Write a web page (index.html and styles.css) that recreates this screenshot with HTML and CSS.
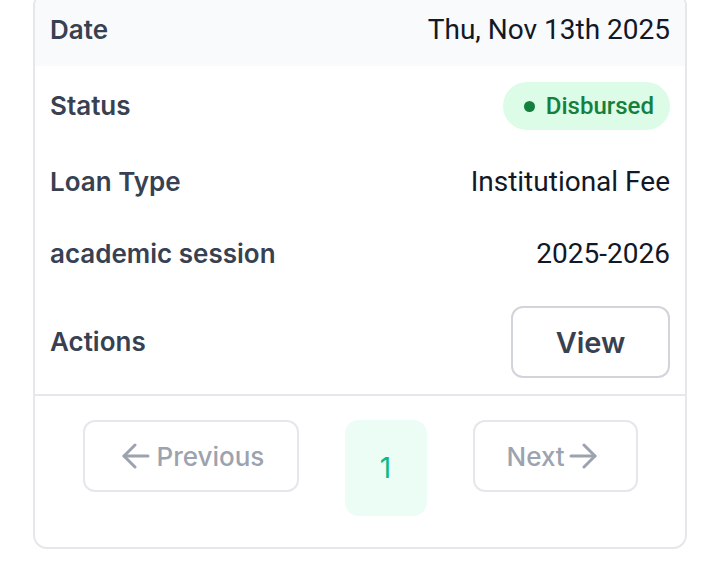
FILE: index.html
```html
<!DOCTYPE html>
<html lang="en">
<head>
<meta charset="utf-8">
<title>Loan detail</title>
<link rel="stylesheet" href="styles.css">
</head>
<body>
<div class="page">
  <div class="card">
    <div class="row row-alt">
      <span class="label">Date</span>
      <span class="value">Thu, Nov 13th 2025</span>
    </div>
    <div class="row">
      <span class="label">Status</span>
      <span class="badge"><span class="dot"></span>Disbursed</span>
    </div>
    <div class="row">
      <span class="label">Loan Type</span>
      <span class="value">Institutional Fee</span>
    </div>
    <div class="row">
      <span class="label">academic session</span>
      <span class="value">2025-2026</span>
    </div>
    <div class="row">
      <span class="label">Actions</span>
      <button class="btn-view" type="button">View</button>
    </div>
    <div class="pager">
      <button class="pg-btn pg-prev" type="button">
        <svg class="arrow" viewBox="0 0 28 28" width="28" height="28" fill="none" stroke="currentColor" stroke-width="3" stroke-linecap="round" stroke-linejoin="round"><path d="M26 14H2"/><path d="M13 3L2 14l11 11"/></svg>
        <span>Previous</span>
      </button>
      <span class="pg-num">1</span>
      <button class="pg-btn pg-next" type="button">
        <span>Next</span>
        <svg class="arrow" viewBox="0 0 28 28" width="28" height="28" fill="none" stroke="currentColor" stroke-width="3" stroke-linecap="round" stroke-linejoin="round"><path d="M2 14h24"/><path d="M15 3l11 11-11 11"/></svg>
      </button>
    </div>
  </div>
</div>
</body>
</html>
```

FILE: styles.css
```css
* { box-sizing: border-box; }
html, body { margin: 0; padding: 0; background: #ffffff; }
body { font-family: Roboto, "Liberation Sans", sans-serif; }

.page {
  padding: 0 33px;
  margin-top: -8px;
}

.card {
  border: 2px solid #e5e7eb;
  border-radius: 14px;
  overflow: hidden;
  background: #fff;
}

.row {
  display: flex;
  justify-content: space-between;
  align-items: center;
  padding: 16px 15px;
  min-height: 72px;
}
.row-alt { background: #f9fafb; }

.label {
  font-family: Inter, "Noto Sans", sans-serif;
  font-weight: 600;
  font-size: 26px;
  line-height: 40px;
  color: #374151;
}

.value {
  font-family: Roboto, sans-serif;
  font-size: 28px;
  line-height: 40px;
  color: #111827;
}

.badge {
  display: inline-flex;
  align-items: center;
  gap: 11px;
  height: 48px;
  padding: 0 16px 0 21px;
  border-radius: 24px;
  background: #dcfce7;
  color: #15803d;
  font-family: Roboto, sans-serif;
  font-weight: 500;
  font-size: 24px;
}
.dot {
  width: 11px;
  height: 11px;
  border-radius: 50%;
  background: #15803d;
}

.btn-view {
  height: 72px;
  width: 159px;
  border: 2px solid #d1d5db;
  border-radius: 12px;
  background: #fff;
  font-family: Inter, sans-serif;
  font-weight: 600;
  font-size: 29px;
  color: #374151;
  padding: 0;
}

.pager {
  border-top: 2px solid #e5e7eb;
  display: flex;
  justify-content: center;
  align-items: flex-start;
  gap: 46px;
  padding: 24px 0 31px;
}

.pg-btn {
  display: inline-flex;
  align-items: center;
  gap: 7px;
  height: 72px;
  border: 2px solid #e5e7eb;
  border-radius: 12px;
  background: #fff;
  color: #9ca3af;
  font-family: Inter, sans-serif;
  font-weight: 500;
  font-size: 26px;
  padding: 0;
}
.pg-prev { width: 216px; padding-left: 37px; }
.pg-next { width: 165px; padding-left: 32px; gap: 4px; }
.arrow { flex: none; }

.pg-num {
  width: 82px;
  height: 96px;
  border-radius: 14px;
  background: #ecfdf5;
  color: #10b981;
  font-family: Inter, sans-serif;
  font-size: 28px;
  display: flex;
  align-items: center;
  justify-content: center;
}
```
